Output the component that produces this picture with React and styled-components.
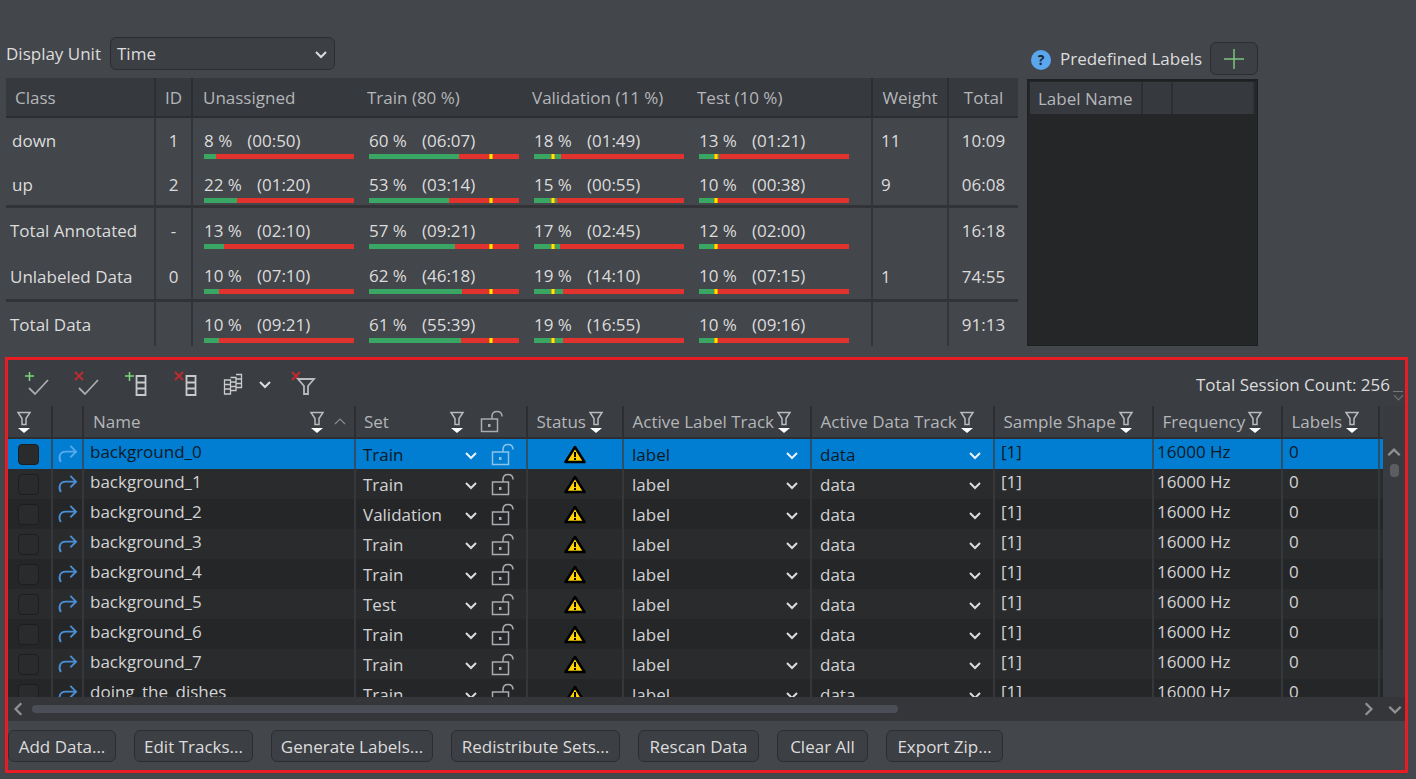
import React from "react";
import styled, { createGlobalStyle } from "styled-components";

const GlobalStyle = createGlobalStyle`
  html, body {
    margin: 0;
    height: 100%;
    overflow: hidden;
    background: #43464b;
  }
  * {
    box-sizing: border-box;
  }
  body {
    font-family: "Open Sans", "Noto Sans", "Liberation Sans", sans-serif;
    font-size: 17px;
    color: #dcdcdc;
  }
`;

const summaryColumns = "150px 37px 165px 165px 165px 185px 76px 69px";
const sessionColumns = "45px 31px 272px 172px 96px 188px 183px 159px 129px 97px";

const summaryRows = [
  { name: "down", id: "1", inset: 6, height: 45, pad: 4, stats: [[8, "00:50"], [60, "06:07"], [18, "01:49"], [13, "01:21"]], weight: "11", total: "10:09" },
  { name: "up", id: "2", inset: 6, height: 45, pad: 2, thick: true, stats: [[22, "01:20"], [53, "03:14"], [15, "00:55"], [10, "00:38"]], weight: "9", total: "06:08" },
  { name: "Total Annotated", id: "-", inset: 4, height: 45, pad: 4, stats: [[13, "02:10"], [57, "09:21"], [17, "02:45"], [12, "02:00"]], weight: "", total: "16:18" },
  { name: "Unlabeled Data", id: "0", inset: 4, height: 49, pad: 5, thick: true, stats: [[10, "07:10"], [62, "46:18"], [19, "14:10"], [10, "07:15"]], weight: "1", total: "74:55" },
  { name: "Total Data", id: "", inset: 4, height: 44, pad: 3, stats: [[10, "09:21"], [61, "55:39"], [19, "16:55"], [10, "09:16"]], weight: "", total: "91:13" },
];

const markers = [null, 80, 11, 10];

const sessions = [
  ["background_0", "Train"],
  ["background_1", "Train"],
  ["background_2", "Validation"],
  ["background_3", "Train"],
  ["background_4", "Train"],
  ["background_5", "Test"],
  ["background_6", "Train"],
  ["background_7", "Train"],
  ["doing_the_dishes", "Train"],
];

const actions = [
  ["Add Data...", 108],
  ["Edit Tracks...", 119],
  ["Generate Labels...", 162],
  ["Redistribute Sets...", 169],
  ["Rescan Data", 121],
  ["Clear All", 91],
  ["Export Zip...", 117],
];

const headers = ["Status", "Active Label Track", "Active Data Track", "Sample Shape", "Frequency", "Labels"];

const Chevron = ({ dir = "down", size = 14, color = "#dcdcdc", width = 2 }) => {
  const paths = {
    down: "M2 5l5 5 5-5",
    up: "M2 9l5-5 5 5",
    left: "M9 2L4 7l5 5",
    right: "M5 2l5 5-5 5",
  };
  return (
    <svg width={size} height={size} viewBox="0 0 14 14" fill="none">
      <path d={paths[dir]} stroke={color} strokeWidth={width} />
    </svg>
  );
};

const FilterIcon = () => (
  <svg width="16" height="22" viewBox="0 0 16 22" fill="none">
    <path d="M2 1.500h12L10 7.500v6H6v-6z" stroke="#b9bbbe" strokeWidth="1.500" />
    <path d="M2 17h12l-6 5z" fill="#ffffff" />
  </svg>
);

const LockIcon = ({ color = "#a9abae" }) => (
  <svg width="26" height="23" viewBox="0 0 26 23" fill="none">
    <rect x="1.500" y="9" width="16" height="12.500" stroke={color} strokeWidth="1.500" />
    <rect x="8" y="14" width="2.500" height="3" fill={color} />
    <path d="M12 9V6.500C12 3.500 14 1.500 17 1.500s5 2 5 5" stroke={color} strokeWidth="1.500" />
  </svg>
);

const RedoIcon = ({ color = "#4a8fd6" }) => (
  <svg width="21" height="19" viewBox="0 0 22 20" fill="none">
    <path d="M4 18C1 13 3 7 9 7h11M14 1l6 6-6 6" stroke={color} strokeWidth="2" />
  </svg>
);

const WarningIcon = () => (
  <svg width="22" height="19" viewBox="0 0 22 19">
    <path d="M11 2L20.500 17H1.500z" fill="#ffd200" stroke="#000" strokeWidth="2.500" strokeLinejoin="round" />
    <rect x="10" y="7" width="2" height="5" fill="#000" />
    <rect x="10" y="13" width="2" height="2" fill="#000" />
  </svg>
);

const Mark = ({ kind }) =>
  kind === "add" ? (
    <path d="M1 5h9M5.500 1v9" stroke="#7ad67a" strokeWidth="1.500" />
  ) : (
    <path d="M1 1l8 8M9 1l-8 8" stroke="#c22a2e" strokeWidth="1.800" />
  );

const CheckTool = ({ kind }) => (
  <svg width="26" height="26" viewBox="0 0 26 26" fill="none">
    <Mark kind={kind} />
    <path d="M5 17l6 6L24 9" stroke="#a9abae" strokeWidth="1.800" />
  </svg>
);

const ColumnTool = ({ kind }) => (
  <svg width="26" height="26" viewBox="0 0 26 26" fill="none">
    <Mark kind={kind} />
    <path d="M12.500 5h9v19h-9zM12.500 11.500h9M12.500 17.500h9" stroke="#c9cacc" strokeWidth="1.800" />
  </svg>
);

const StackTool = () => (
  <svg width="20" height="24" viewBox="0 0 20 24" fill="none" stroke="#c9cacc" strokeWidth="1.300">
    <path d="M1.500 8h6v14h-6zM1.500 12.500h6M1.500 17h6" />
    <path d="M7.500 5.500h5.500v13H7.500M7.500 10h5.500M7.500 14.500h5.500" />
    <path d="M13 2.500h5.500v13H13M13 7h5.500M13 11.500h5.500" />
  </svg>
);

const FilterTool = () => (
  <svg width="26" height="26" viewBox="0 0 26 26" fill="none">
    <Mark kind="remove" />
    <path d="M7 8h16l-6 7v8h-4v-8z" stroke="#b9bbbe" strokeWidth="1.800" />
  </svg>
);

const Page = styled.div`
  width: 1416px;
  height: 779px;
  padding: 37px 8px 0 5px;
  overflow: hidden;
`;

const TopRow = styled.div`
  display: flex;
  gap: 9px;
  height: 320px;
  padding-left: 1px;
`;

const LeftColumn = styled.div`
  width: 1012px;
`;

const UnitRow = styled.div`
  display: flex;
  align-items: center;
  gap: 9px;
  height: 33px;
  margin-bottom: 8px;
`;

const Select = styled.div`
  width: 225px;
  height: 33px;
  display: flex;
  align-items: center;
  justify-content: space-between;
  padding: 0 6px;
  border: 1.500px solid #2b2d31;
  border-radius: 6px;
  background: #3c3f44;
`;

const SummaryHeader = styled.div`
  display: grid;
  grid-template-columns: ${summaryColumns};
  height: 40px;
  background: #36393e;
  border-bottom: 2px solid #2c2e32;
  color: #b4b6b9;
`;

const HeadCell = styled.div`
  display: flex;
  align-items: center;
  justify-content: ${(p) => (p.$center ? "center" : "flex-start")};
  padding-left: ${(p) => (p.$center ? 0 : p.$inset ?? 10)}px;
  padding-top: 1px;
  border-right: ${(p) => (p.$plain ? "none" : "2px solid #2c2e32")};
`;

const SummaryRow = styled.div`
  display: grid;
  grid-template-columns: ${summaryColumns};
  height: ${(p) => p.$height}px;
  border-bottom: ${(p) => (p.$thick ? "3px solid #313337" : "none")};
`;

const BodyCell = styled.div`
  display: flex;
  align-items: center;
  justify-content: ${(p) => (p.$center ? "center" : "flex-start")};
  padding-left: ${(p) => (p.$center ? 0 : p.$inset ?? 8)}px;
  border-right: ${(p) => (p.$plain ? "none" : "2px solid #33353a")};
`;

const StatCell = styled.div`
  display: flex;
  flex-direction: column;
  justify-content: flex-end;
  padding: 0 0 ${(p) => p.$pad}px 11px;
  border-right: ${(p) => (p.$edge ? "2px solid #33353a" : "none")};
`;

const StatText = styled.div`
  display: flex;
  gap: 15px;
  line-height: 22px;
  margin-bottom: 2px;
`;

const Bar = styled.div`
  position: relative;
  width: 150px;
  height: 5px;
  background: #e2322d;
`;

const BarFill = styled.div`
  height: 100%;
  background: #3aa663;
`;

const BarMarker = styled.div`
  position: absolute;
  top: 0;
  width: 4px;
  height: 100%;
  background: #ffea00;
  border-left: 1px solid #f5a000;
  border-right: 1px solid #f5a000;
`;

const RightColumn = styled.div`
  width: 231px;
  padding-top: 5px;
`;

const LabelsHead = styled.div`
  display: flex;
  align-items: center;
  height: 33px;
  margin-bottom: 4px;
  padding-left: 4px;
  white-space: nowrap;
`;

const HelpBadge = styled.div`
  flex: none;
  width: 20px;
  height: 20px;
  margin: 3px 9px 0 0;
  border-radius: 50%;
  background: #5aa7f0;
  color: #20262e;
  font-size: 14px;
  font-weight: 700;
  line-height: 20px;
  text-align: center;
`;

const AddButton = styled.div`
  flex: none;
  width: 48px;
  height: 33px;
  margin-left: auto;
  display: flex;
  align-items: center;
  justify-content: center;
  border: 1.500px solid #2b2d31;
  border-radius: 6px;
  background: #3c3f44;
`;

const LabelsTable = styled.div`
  height: 267px;
  padding: 1px 2px 0;
  background: #252628;
  border: 1px solid #1f2022;
  border-top-width: 2px;
`;

const LabelsHeader = styled.div`
  display: grid;
  grid-template-columns: 113px 30px 1fr;
  height: 32px;
  background: #36393e;
  color: #b4b6b9;
`;

const Panel = styled.section`
  height: 416px;
  border: 3px solid #e81c24;
  display: flex;
  flex-direction: column;
`;

const Toolbar = styled.div`
  height: 46px;
  display: flex;
  align-items: center;
  flex: none;
  padding: 2px 0 0 16px;
  background: #3a3d42;
`;

const ToolButton = styled.div`
  width: ${(p) => p.$width ?? 50}px;
  display: flex;
  align-items: center;
`;

const SessionCount = styled.div`
  margin-left: auto;
  padding-right: 15px;
  position: relative;
`;

const CountGrip = styled.div`
  position: absolute;
  right: 2px;
  bottom: -5px;
  width: 10px;
  height: 10px;
  border-top: 1px solid #777;
  &::after {
    content: "";
    display: block;
    width: 6px;
    height: 6px;
    margin: 0 auto;
    border-right: 1.500px solid #777;
    border-bottom: 1.500px solid #777;
    transform: rotate(45deg);
  }
`;

const TableArea = styled.div`
  flex: 1;
  min-height: 0;
  display: grid;
  grid-template-columns: 1fr 22px;
`;

const TableColumn = styled.div`
  min-width: 0;
  min-height: 0;
  display: flex;
  flex-direction: column;
`;

const SessionHeader = styled.div`
  flex: none;
  display: grid;
  grid-template-columns: ${sessionColumns};
  height: 33px;
  background: #3a3d42;
  border-bottom: 2px solid #2c2e32;
  color: #b4b6b9;
`;

const SessionHead = styled.div`
  display: flex;
  align-items: center;
  padding: 0 ${(p) => p.$right ?? 0}px 0 ${(p) => p.$left ?? 8.5}px;
  border-right: 2px solid #2c2e32;
  white-space: nowrap;
`;

const HeadTools = styled.div`
  display: flex;
  align-items: center;
  margin-left: auto;
  gap: ${(p) => p.$gap ?? 6}px;
`;

const RowsViewport = styled.div`
  flex: 1;
  min-height: 0;
  overflow: hidden;
`;

const SessionRow = styled.div`
  display: grid;
  grid-template-columns: ${sessionColumns};
  height: 30px;
  background: ${(p) => (p.$selected ? "#017dd1" : p.$odd ? "#2a2b2d" : "#252628")};
  color: ${(p) => (p.$selected ? "#0c1a26" : "#d2d3d4")};
`;

const SessionCell = styled.div`
  display: flex;
  align-items: center;
  justify-content: ${(p) => (p.$center ? "center" : "flex-start")};
  padding: ${(p) => p.$top ?? 0}px ${(p) => p.$right ?? 0}px 0 ${(p) => p.$left ?? 0}px;
  border-right: 2px solid ${(p) => (p.$selected ? "#2c4f6a" : "#35373b")};
  white-space: nowrap;
  overflow: hidden;
`;

const NameText = styled.span`
  margin-top: -6px;
`;

const Checkbox = styled.div`
  width: 21px;
  height: 21px;
  border: 1.500px solid #1d1e20;
  border-radius: 4px;
  background: #2a2b2d;
`;

const CellTools = styled.div`
  display: flex;
  align-items: center;
  margin-left: auto;
  gap: ${(p) => p.$gap ?? 0}px;
`;

const VerticalBar = styled.div`
  display: flex;
  flex-direction: column;
  align-items: center;
  padding-top: 39px;
  background: #383b3f;
`;

const VerticalThumb = styled.div`
  width: 9px;
  height: 13px;
  margin-top: 3px;
  border-radius: 4px;
  background: #5a5d62;
`;

const HorizontalBar = styled.div`
  flex: none;
  display: flex;
  align-items: center;
  gap: 5px;
  height: 24px;
  padding: 0 2px 0 3px;
  background: #34363a;
`;

const HorizontalTrack = styled.div`
  flex: 1;
  height: 8px;
  border-radius: 4px;
`;

const HorizontalThumb = styled.div`
  width: 866px;
  height: 100%;
  border-radius: 4px;
  background: #4b4e56;
`;

const ScrollEnd = styled.div`
  display: flex;
  align-items: center;
  gap: 11px;
`;

const ButtonRow = styled.div`
  flex: none;
  height: 49px;
  display: flex;
  align-items: center;
  gap: 18px;
  padding-top: 1px;
  background: #43464b;
`;

const ActionButton = styled.div`
  width: ${(p) => p.$width}px;
  height: 32px;
  display: flex;
  align-items: center;
  justify-content: center;
  border: 1.500px solid #2b2d31;
  border-radius: 6px;
  background: #3c3f44;
  color: #dcdcdc;
  white-space: nowrap;
`;

const App = () => {
  return (
    <Page>
      <GlobalStyle />
      <TopRow>
        <LeftColumn>
          <UnitRow>
            <span>Display Unit</span>
            <Select>
              <span>Time</span>
              <Chevron size={14} />
            </Select>
          </UnitRow>
          <SummaryHeader>
            <HeadCell $inset={9}>Class</HeadCell>
            <HeadCell $center>ID</HeadCell>
            <HeadCell $plain>Unassigned</HeadCell>
            <HeadCell $plain $inset={9}>Train (80 %)</HeadCell>
            <HeadCell $plain $inset={9}>Validation (11 %)</HeadCell>
            <HeadCell $inset={9}>Test (10 %)</HeadCell>
            <HeadCell $center>Weight</HeadCell>
            <HeadCell $center $plain>Total</HeadCell>
          </SummaryHeader>
          {summaryRows.map((row) => (
            <SummaryRow key={row.name} $height={row.height} $thick={row.thick}>
              <BodyCell $inset={row.inset}>{row.name}</BodyCell>
              <BodyCell $center>{row.id}</BodyCell>
              {row.stats.map(([pct, time], i) => (
                <StatCell key={i} $pad={row.pad} $edge={i === 3}>
                  <StatText>
                    <span>{pct} %</span>
                    <span>({time})</span>
                  </StatText>
                  <Bar>
                    <BarFill style={{ width: `${pct}%` }} />
                    {markers[i] && <BarMarker style={{ left: `${markers[i]}%` }} />}
                  </Bar>
                </StatCell>
              ))}
              <BodyCell>{row.weight}</BodyCell>
              <BodyCell $center $plain>{row.total}</BodyCell>
            </SummaryRow>
          ))}
        </LeftColumn>
        <RightColumn>
          <LabelsHead>
            <HelpBadge>?</HelpBadge>
            <span>Predefined Labels</span>
            <AddButton>
              <svg width="22" height="22" viewBox="0 0 22 22">
                <path d="M1 11h20M11 1v20" stroke="#7cc47c" strokeWidth="1.500" />
              </svg>
            </AddButton>
          </LabelsHead>
          <LabelsTable>
            <LabelsHeader>
              <HeadCell $inset={8}>Label Name</HeadCell>
              <HeadCell />
              <HeadCell />
            </LabelsHeader>
          </LabelsTable>
        </RightColumn>
      </TopRow>
      <Panel>
        <Toolbar>
          <ToolButton><CheckTool kind="add" /></ToolButton>
          <ToolButton><CheckTool kind="remove" /></ToolButton>
          <ToolButton><ColumnTool kind="add" /></ToolButton>
          <ToolButton $width={49}><ColumnTool kind="remove" /></ToolButton>
          <ToolButton $width={35}><StackTool /></ToolButton>
          <ToolButton $width={33}><Chevron size={14} /></ToolButton>
          <ToolButton><FilterTool /></ToolButton>
          <SessionCount>
            Total Session Count: 256
            <CountGrip />
          </SessionCount>
        </Toolbar>
        <TableArea>
          <TableColumn>
            <SessionHeader>
              <SessionHead $left={8}><FilterIcon /></SessionHead>
              <SessionHead />
              <SessionHead $left={9} $right={7}>
                Name
                <HeadTools $gap={8}>
                  <FilterIcon />
                  <Chevron dir="up" size={14} color="#8a8c8f" width={1.2} />
                </HeadTools>
              </SessionHead>
              <SessionHead $left={8} $right={20}>
                Set
                <HeadTools $gap={15}>
                  <FilterIcon />
                  <LockIcon />
                </HeadTools>
              </SessionHead>
              {headers.map((label) => (
                <SessionHead key={label} $right={18}>
                  {label}
                  <HeadTools><FilterIcon /></HeadTools>
                </SessionHead>
              ))}
            </SessionHeader>
            <RowsViewport>
              {sessions.map(([name, set], i) => {
                const selected = i === 0;
                const chevronColor = selected ? "#e8f3fb" : "#dcdcdc";
                return (
                  <SessionRow key={name} $selected={selected} $odd={i % 2 === 1}>
                    <SessionCell $left={10} $selected={selected}><Checkbox /></SessionCell>
                    <SessionCell $center $selected={selected}>
                      <RedoIcon color={selected ? "#5aa9ea" : "#4a8fd6"} />
                    </SessionCell>
                    <SessionCell $left={6} $selected={selected}><NameText>{name}</NameText></SessionCell>
                    <SessionCell $left={7} $right={9} $top={1} $selected={selected}>
                      {set}
                      <CellTools $gap={13}>
                        <Chevron color={chevronColor} />
                        <LockIcon color={selected ? "#8cc4ec" : "#a9abae"} />
                      </CellTools>
                    </SessionCell>
                    <SessionCell $center $selected={selected}><WarningIcon /></SessionCell>
                    <SessionCell $left={8} $right={11} $top={1} $selected={selected}>
                      label
                      <CellTools><Chevron color={chevronColor} /></CellTools>
                    </SessionCell>
                    <SessionCell $left={8} $right={11} $top={1} $selected={selected}>
                      data
                      <CellTools><Chevron color={chevronColor} /></CellTools>
                    </SessionCell>
                    <SessionCell $left={6} $selected={selected}><NameText>[1]</NameText></SessionCell>
                    <SessionCell $left={3} $selected={selected}><NameText>16000 Hz</NameText></SessionCell>
                    <SessionCell $left={6} $selected={selected}><NameText>0</NameText></SessionCell>
                  </SessionRow>
                );
              })}
            </RowsViewport>
          </TableColumn>
          <VerticalBar>
            <Chevron dir="up" size={16} color="#8f9194" />
            <VerticalThumb />
          </VerticalBar>
        </TableArea>
        <HorizontalBar>
          <Chevron dir="left" size={16} color="#8f9194" />
          <HorizontalTrack><HorizontalThumb /></HorizontalTrack>
          <ScrollEnd>
            <Chevron dir="right" size={16} color="#8f9194" />
            <Chevron dir="down" size={16} color="#8f9194" />
          </ScrollEnd>
        </HorizontalBar>
        <ButtonRow>
          {actions.map(([label, width]) => (
            <ActionButton key={label} $width={width}>{label}</ActionButton>
          ))}
        </ButtonRow>
      </Panel>
    </Page>
  );
};

export default App;
